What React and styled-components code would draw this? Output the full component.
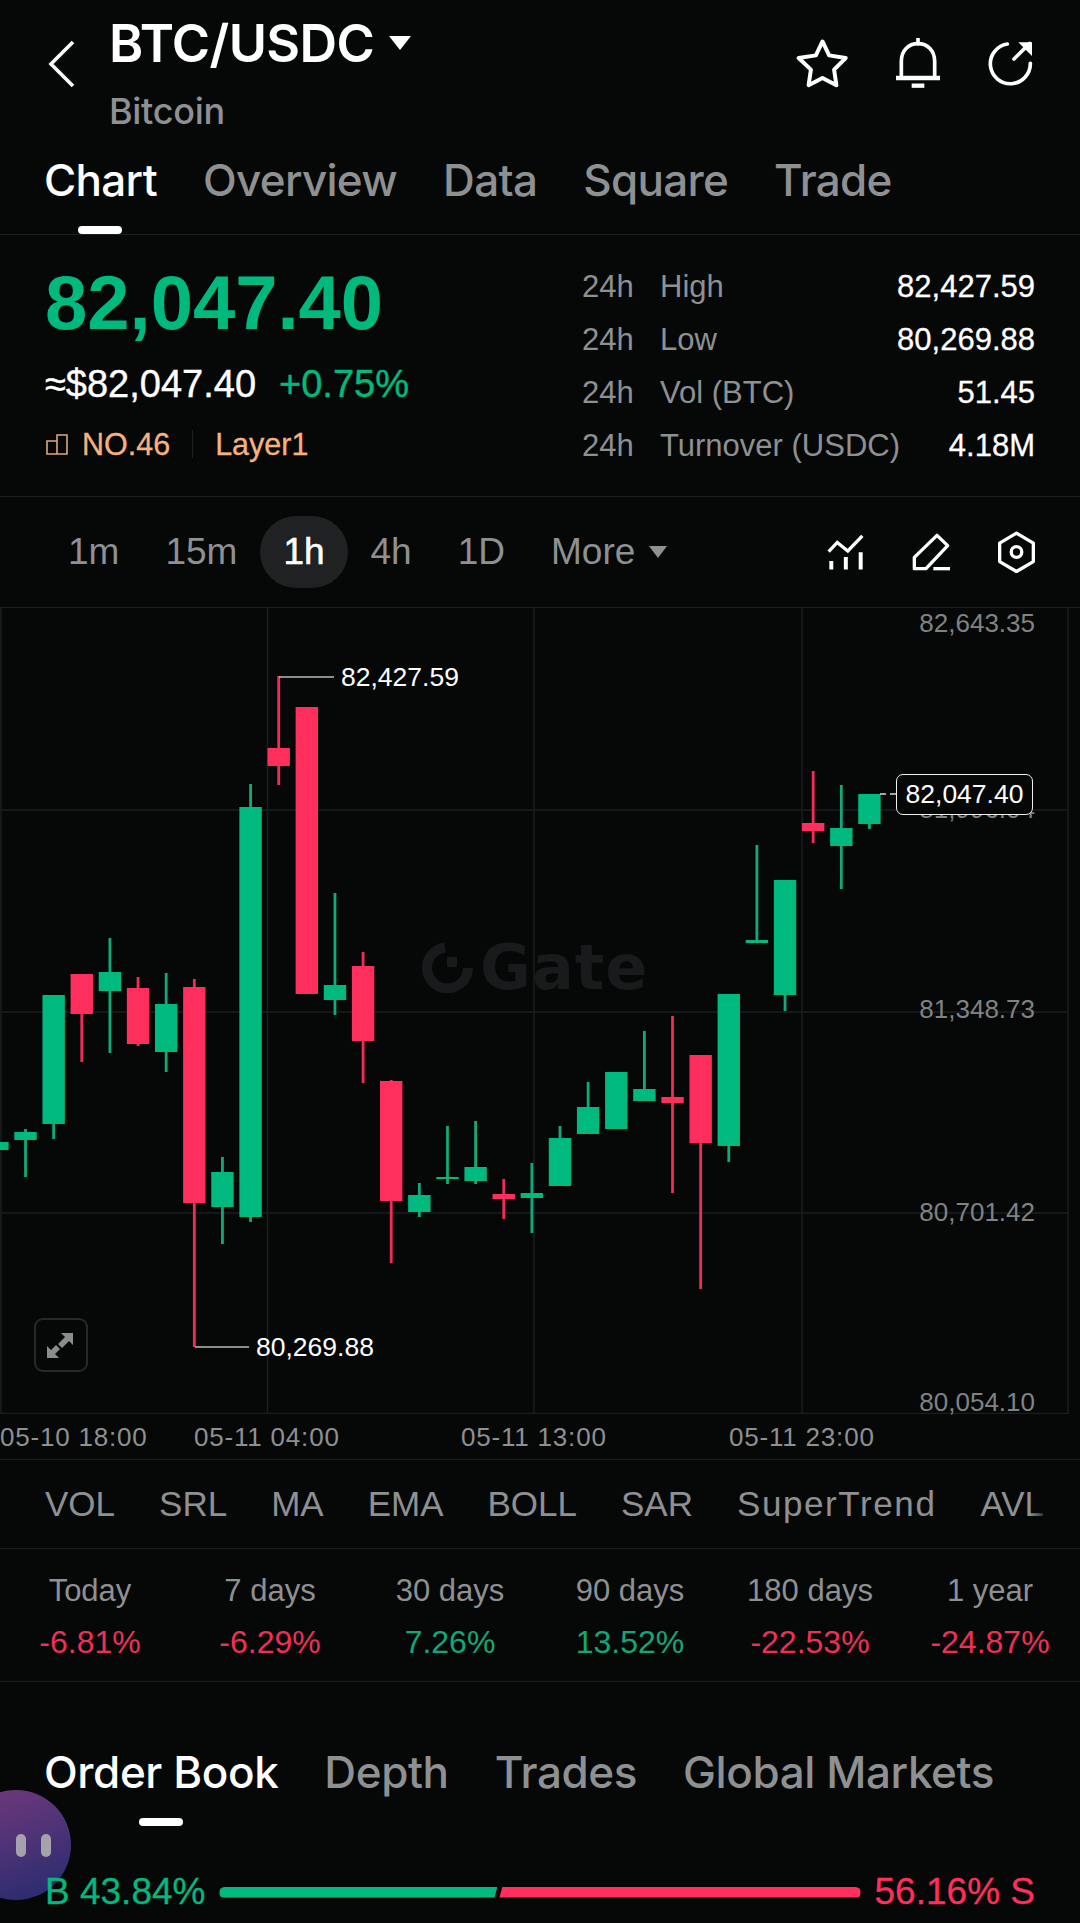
import { Fragment } from "react"
import styled, { createGlobalStyle } from "styled-components"

const GREEN = "#00b97f"
const RED = "#ff2e5c"
const MUTED = "#8e9092"
const LINE = "#1c1e1f"
const NUM = `"Liberation Sans", Arial, sans-serif`
const UI = `Inter, "Liberation Sans", sans-serif`

const GlobalStyle = createGlobalStyle`
    html, body {
        margin: 0;
        padding: 0;
        background: #060808;
    }
    * {
        box-sizing: border-box;
    }
`

const Page = styled.div`
    position: relative;
    width: 1080px;
    height: 1923px;
    overflow: hidden;
    background: #060808;
    color: #fff;
    font-family: ${UI};
`

const TopBar = styled.div`
    display: flex;
    align-items: flex-start;
    height: 130px;
    padding: 0 47px 0 48px;
`

const BackIcon = styled.svg`
    margin-top: 40px;
    margin-right: 33px;
    flex: none;
`

const TitleCol = styled.div`
    display: flex;
    flex-direction: column;
    flex: 1;
`

const TitleRow = styled.div`
    display: flex;
    align-items: center;
    height: 86px;
    gap: 15px;
`

const Title = styled.span`
    font-size: 52px;
    font-weight: 600;
    letter-spacing: -0.6px;
`

const Caret = styled.span`
    width: 0;
    height: 0;
    border-left: ${(p) => p.$size}px solid transparent;
    border-right: ${(p) => p.$size}px solid transparent;
    border-top: ${(p) => p.$size * 1.35}px solid ${(p) => p.$color};
`

const SubTitle = styled.span`
    margin-top: 6px;
    font-size: 36px;
    line-height: 38px;
    font-weight: 500;
    letter-spacing: -0.3px;
    color: ${MUTED};
`

const TopIcons = styled.div`
    display: flex;
    align-items: center;
    gap: 47px;
    height: 126px;
`

const Tabs = styled.div`
    display: flex;
    gap: ${(p) => p.$gap}px;
    height: ${(p) => p.$height}px;
    padding: ${(p) => p.$top}px 44px 0;
    letter-spacing: ${(p) => p.$spacing}px;
    border-bottom: ${(p) => (p.$line ? `1px solid ${LINE}` : "none")};
`

const Tab = styled.span`
    position: relative;
    height: 54px;
    font-size: 44px;
    line-height: 54px;
    font-weight: 500;
    color: ${(p) => (p.$active ? "#fff" : MUTED)};
    &::after {
        content: "";
        display: ${(p) => (p.$active ? "block" : "none")};
        position: absolute;
        left: 50%;
        bottom: ${(p) => p.$under}px;
        width: 44px;
        height: 8px;
        margin-left: -22px;
        border-radius: 4px;
        background: #fff;
    }
`

const Summary = styled.div`
    display: flex;
    justify-content: space-between;
    height: 262px;
    padding: 29px 45px 0;
    border-bottom: 1px solid ${LINE};
`

const PriceCol = styled.div`
    display: flex;
    flex-direction: column;
`

const BigPrice = styled.div`
    font-family: ${NUM};
    font-size: 76px;
    line-height: 78px;
    font-weight: 700;
    color: ${GREEN};
`

const FiatRow = styled.div`
    display: flex;
    align-items: center;
    gap: 23px;
    margin-top: 20px;
    height: 44px;
    font-family: ${NUM};
    font-size: 38px;
    -webkit-text-stroke: 0.4px currentColor;
`

const Fiat = styled.span`
    color: #fff;
`

const Change = styled.span`
    color: ${GREEN};
`

const TagRow = styled.div`
    display: flex;
    align-items: center;
    height: 36px;
    margin-top: 20px;
    font-family: ${NUM};
    font-size: 30.5px;
    color: #f5b27e;
    -webkit-text-stroke: 0.3px currentColor;
`

const RankIcon = styled.svg`
    margin: 0 14px 0 1px;
`

const TagSep = styled.span`
    width: 1px;
    height: 28px;
    margin: 0 22px;
    background: #1f2021;
`

const Stats = styled.div`
    display: grid;
    grid-template-columns: 78px minmax(0, 1fr) auto;
    grid-auto-rows: 53px;
    width: 453px;
    margin-top: -4px;
    align-items: center;
    white-space: nowrap;
    font-family: ${NUM};
    font-size: 31px;
`

const StatMuted = styled.span`
    color: ${MUTED};
`

const StatValue = styled.span`
    color: #fff;
    text-align: right;
    font-size: 31px;
    -webkit-text-stroke: 0.3px currentColor;
`

const Toolbar = styled.div`
    display: flex;
    align-items: center;
    height: 111px;
    padding: 0 45px;
    border-bottom: 1px solid ${LINE};
`

const Frame = styled.span`
    display: flex;
    align-items: center;
    height: 72px;
    padding: 0 23px;
    gap: 14px;
    border-radius: 36px;
    font-family: ${NUM};
    font-size: 37px;
    color: ${(p) => (p.$active ? "#fff" : MUTED)};
    background: ${(p) => (p.$active ? "#1f2122" : "transparent")};
    -webkit-text-stroke: ${(p) => (p.$active ? "0.6px #fff" : "0")};
`

const ToolIcons = styled.div`
    display: flex;
    align-items: center;
    gap: 47px;
    margin-left: auto;
`

const ChartArea = styled.div`
    position: relative;
    height: 806px;
`

const ChartSvg = styled.svg`
    position: relative;
    display: block;
    z-index: 1;
`

const Watermark = styled.div`
    position: absolute;
    left: 422px;
    top: 334px;
    display: flex;
    align-items: center;
    gap: 7px;
    height: 51px;
    font-family: "DejaVu Sans", sans-serif;
    font-size: 62px;
    font-weight: 700;
    letter-spacing: 1px;
    color: #191a1b;
`

const Axis = styled.span`
    position: absolute;
    z-index: 2;
    right: 45px;
    top: ${(p) => p.$top}px;
    font-family: ${NUM};
    font-size: 26px;
    line-height: 30px;
    color: #808284;
`

const Marker = styled.span`
    position: absolute;
    z-index: 2;
    left: ${(p) => p.$left}px;
    top: ${(p) => p.$top}px;
    font-family: ${NUM};
    font-size: 26.5px;
    line-height: 30px;
    color: #fff;
`

const PriceTag = styled.span`
    position: absolute;
    z-index: 3;
    left: 896px;
    top: 166px;
    width: 137px;
    height: 41px;
    border: 1px solid #f0f0f0;
    border-radius: 7px;
    background: #060808;
    font-family: ${NUM};
    font-size: 26.5px;
    line-height: 39px;
    text-align: center;
    color: #fff;
`

const ExpandBtn = styled.div`
    position: absolute;
    z-index: 2;
    left: 34px;
    top: 710px;
    display: flex;
    width: 54px;
    height: 54px;
    border: 2px solid #26282a;
    border-radius: 9px;
`

const TimeAxis = styled.div`
    display: grid;
    grid-template-columns: 194px 267px 268px 1fr;
    align-items: center;
    height: 46px;
    padding-top: 2px;
    border-bottom: 1px solid ${LINE};
    font-family: ${NUM};
    font-size: 26px;
    letter-spacing: 0.8px;
    color: ${MUTED};
`

const Indicators = styled.div`
    position: relative;
    display: flex;
    align-items: center;
    gap: 44px;
    height: 89px;
    padding: 0 45px;
    overflow: hidden;
    white-space: nowrap;
    border-bottom: 1px solid ${LINE};
    font-family: ${NUM};
    font-size: 35px;
    color: ${MUTED};
    &::after {
        content: "";
        position: absolute;
        right: 0;
        top: 0;
        bottom: 0;
        width: 50px;
        background: linear-gradient(to right, rgba(6, 8, 8, 0), #060808 40%);
    }
`

const IndicatorName = styled.span`
    letter-spacing: ${(p) => (p.$wide ? 1.6 : 0)}px;
`

const Periods = styled.div`
    display: grid;
    grid-template-columns: repeat(6, 180px);
    height: 133px;
    padding-top: 25px;
    border-bottom: 1px solid ${LINE};
    font-family: ${NUM};
    text-align: center;
`

const PeriodCol = styled.div`
    display: flex;
    flex-direction: column;
    gap: 17px;
`

const PeriodLabel = styled.span`
    font-size: 31px;
    line-height: 34px;
    color: ${MUTED};
`

const PeriodValue = styled.span`
    font-size: 32px;
    line-height: 34px;
    color: ${(p) => (p.$up ? "#10a878" : "#ef2f57")};
`

const Ratio = styled.div`
    position: relative;
    z-index: 1;
    display: flex;
    align-items: center;
    height: 36px;
    margin-top: 49px;
    padding: 0 45px;
    font-family: ${NUM};
    font-size: 37px;
    -webkit-text-stroke: 0.3px currentColor;
`

const RatioText = styled.span`
    color: ${(p) => p.$color};
`

const RatioBar = styled.div`
    display: flex;
    flex: 1;
    gap: 2px;
    height: 11px;
    margin: 0 14px;
`

const BuyBar = styled.div`
    flex: none;
    width: 278px;
    background: ${GREEN};
    border-radius: 6px 0 0 6px;
    clip-path: polygon(0 0, 100% 0, calc(100% - 3px) 100%, 0 100%);
`

const SellBar = styled.div`
    flex: 1;
    background: ${RED};
    border-radius: 0 6px 6px 0;
    clip-path: polygon(3px 0, 100% 0, 100% 100%, 0 100%);
`

const Blob = styled.div`
    position: absolute;
    left: -39px;
    top: 1790px;
    display: flex;
    align-items: center;
    justify-content: flex-end;
    gap: 15px;
    width: 110px;
    height: 110px;
    padding-right: 20px;
    border-radius: 50%;
    background: linear-gradient(160deg, #74397a 0%, #4d3277 50%, #232b6c 100%);
`

const BlobBar = styled.span`
    width: 10px;
    height: 23px;
    border-radius: 5px;
    background: #a5a2ac;
`

// color, wick top, body top, body bottom, wick bottom - all in page px
const candles = [
    ["g", 1142, 1142, 1150, 1150],
    ["g", 1129, 1132, 1140, 1177],
    ["g", 995, 995, 1124, 1139],
    ["r", 974, 974, 1014, 1062],
    ["g", 938, 972, 991, 1053],
    ["r", 977, 988, 1044, 1046],
    ["g", 973, 1004, 1052, 1072],
    ["r", 979, 987, 1203, 1347],
    ["g", 1157, 1172, 1207, 1244],
    ["g", 784, 807, 1217, 1222],
    ["r", 676, 748, 766, 785],
    ["r", 707, 707, 994, 994],
    ["g", 893, 985, 1000, 1015],
    ["r", 952, 966, 1041, 1083],
    ["r", 1080, 1081, 1201, 1263],
    ["g", 1183, 1195, 1212, 1217],
    ["g", 1126, 1177, 1179, 1184],
    ["g", 1121, 1167, 1181, 1184],
    ["r", 1179, 1194, 1199, 1219],
    ["g", 1163, 1193, 1198, 1233],
    ["g", 1126, 1138, 1186, 1186],
    ["g", 1082, 1107, 1134, 1134],
    ["g", 1072, 1072, 1129, 1129],
    ["g", 1031, 1089, 1101, 1101],
    ["r", 1016, 1097, 1103, 1193],
    ["r", 1055, 1055, 1143, 1289],
    ["g", 994, 994, 1146, 1162],
    ["g", 845, 940, 943, 943],
    ["g", 880, 880, 995, 1011],
    ["r", 771, 823, 831, 843],
    ["g", 785, 828, 846, 889],
    ["g", 794, 794, 824, 829],
]

const gridX = [1, 267.5, 534, 802, 1068]
const gridY = [810, 1012, 1213]

function Chart() {
    return (
        <ChartSvg width="1080" height="806" viewBox="0 608 1080 806">
            {gridX.map((x) => (
                <line key={x} x1={x} x2={x} y1="608" y2="1414" stroke="#1b1d1e" strokeWidth="1.5" />
            ))}
            {gridY.map((y) => (
                <line key={y} x1="0" x2="1068" y1={y} y2={y} stroke="#1b1d1e" strokeWidth="1.5" />
            ))}
            <line x1="0" x2="1068" y1="1413.5" y2="1413.5" stroke="#1b1d1e" strokeWidth="1.5" />
            {candles.map(([color, top, open, close, bottom], i) => {
                const x = -2.6 + 28.13 * i
                const up = color === "g"
                return (
                    <g key={i}>
                        <rect x={x - 1.4} y={top} width="2.8" height={bottom - top} fill={up ? "#12a97b" : "#f22c58"} />
                        <rect x={x - 11.2} y={open} width="22.4" height={close - open} fill={up ? GREEN : RED} />
                    </g>
                )
            })}
            <path d="M279 677H334" stroke="#b9bbbc" strokeWidth="1.5" fill="none" />
            <path d="M195 1347H249" stroke="#b9bbbc" strokeWidth="1.5" fill="none" />
            <path d="M880 794H886M890 794H896" stroke="#d8d8d8" strokeWidth="1.5" fill="none" />
        </ChartSvg>
    )
}

function StarIcon() {
    return (
        <svg width="53" height="50" viewBox="50 40 160 150" fill="none" stroke="#fff" strokeWidth="12" strokeLinejoin="round">
            <path d="M130 50 150 92 200 100 165 135 172 182 130 160 88 182 95 135 58 100 110 92Z" />
        </svg>
    )
}

function BellIcon() {
    return (
        <svg width="44" height="50" viewBox="345 40 132 150" fill="none" stroke="#fff" strokeWidth="11">
            <path d="M361 160V110C361 78 382 57 411 57S461 78 461 110V160" />
            <path d="M411 40V57" strokeLinecap="round" />
            <path d="M345 160H477" strokeWidth="13" />
            <path d="M392 183H430" strokeWidth="13" />
        </svg>
    )
}

function ShareIcon() {
    return (
        <svg width="46" height="45" viewBox="622 55 138 135" fill="none" stroke="#fff" strokeWidth="11" strokeLinecap="round">
            <path d="M683 64A60 60 0 1 0 752 122" />
            <path d="M703 109 750 62" />
            <path d="M716 59H757V100Z" fill="#fff" stroke="none" />
        </svg>
    )
}

function IndicatorIcon() {
    return (
        <svg width="37" height="36" viewBox="45 43 112 108" fill="none" stroke="#fff" strokeWidth="10">
            <path d="M50 96 76 68 108 94 152 48" />
            <path d="M58 150V124M102 150V112M147 150V98" strokeWidth="12" />
        </svg>
    )
}

function PenIcon() {
    return (
        <svg width="40" height="38" viewBox="300 38 120 114" fill="none" stroke="#fff" strokeWidth="10" strokeLinejoin="round">
            <path d="M310 111 378 45 410 76 345 145H310Z" />
            <path d="M367 145H417" />
        </svg>
    )
}

function HexIcon() {
    return (
        <svg width="37" height="42" viewBox="562 36 112 126" fill="none" stroke="#fff" strokeWidth="10" strokeLinejoin="round">
            <path d="M618 42 669 72V128L618 158 567 128V72Z" />
            <circle cx="618" cy="99" r="16" />
        </svg>
    )
}

function GateMark() {
    return (
        <svg width="51" height="51" viewBox="0 0 51 51" fill="none">
            <path d="M23 5.5A20.5 20.5 0 1 0 46 26" stroke="#191a1b" strokeWidth="10" />
            <rect x="25" y="15" width="10" height="10" fill="#191a1b" />
        </svg>
    )
}

const frames = ["1m", "15m", "1h", "4h", "1D"]
const stats = [
    ["High", "82,427.59"],
    ["Low", "80,269.88"],
    ["Vol (BTC)", "51.45"],
    ["Turnover (USDC)", "4.18M"],
]
const indicators = ["VOL", "SRL", "MA", "EMA", "BOLL", "SAR", "SuperTrend", "AVL"]
const periods = [
    ["Today", "-6.81%", false],
    ["7 days", "-6.29%", false],
    ["30 days", "7.26%", true],
    ["90 days", "13.52%", true],
    ["180 days", "-22.53%", false],
    ["1 year", "-24.87%", false],
]

function App() {
    return (
        <Page>
            <GlobalStyle />
            <TopBar>
                <BackIcon width="28" height="48" viewBox="0 0 28 48" fill="none" stroke="#fff" strokeWidth="3.6">
                    <path d="M25 2 3 24 25 46" />
                </BackIcon>
                <TitleCol>
                    <TitleRow>
                        <Title>BTC/USDC</Title>
                        <Caret $size={11} $color="#fff" />
                    </TitleRow>
                    <SubTitle>Bitcoin</SubTitle>
                </TitleCol>
                <TopIcons>
                    <StarIcon />
                    <BellIcon />
                    <ShareIcon />
                </TopIcons>
            </TopBar>

            <Tabs $gap={46} $height={105} $top={23} $spacing={-0.7} $line>
                <Tab $active $under={-27}>Chart</Tab>
                <Tab>Overview</Tab>
                <Tab>Data</Tab>
                <Tab>Square</Tab>
                <Tab>Trade</Tab>
            </Tabs>

            <Summary>
                <PriceCol>
                    <BigPrice>82,047.40</BigPrice>
                    <FiatRow>
                        <Fiat>≈$82,047.40</Fiat>
                        <Change>+0.75%</Change>
                    </FiatRow>
                    <TagRow>
                        <RankIcon width="22" height="22" viewBox="0 0 22 22" fill="none" stroke="#dba87e" strokeWidth="1.6">
                            <path d="M1 8H11V21H1ZM11 2H21V21H11Z" />
                        </RankIcon>
                        NO.46
                        <TagSep />
                        Layer1
                    </TagRow>
                </PriceCol>
                <Stats>
                    {stats.map(([label, value]) => (
                        <Fragment key={label}>
                            <StatMuted>24h</StatMuted>
                            <StatMuted>{label}</StatMuted>
                            <StatValue>{value}</StatValue>
                        </Fragment>
                    ))}
                </Stats>
            </Summary>

            <Toolbar>
                {frames.map((f) => (
                    <Frame key={f} $active={f === "1h"}>{f}</Frame>
                ))}
                <Frame>
                    More
                    <Caret $size={9} $color={MUTED} />
                </Frame>
                <ToolIcons>
                    <IndicatorIcon />
                    <PenIcon />
                    <HexIcon />
                </ToolIcons>
            </Toolbar>

            <ChartArea>
                <Watermark>
                    <GateMark />
                    <span>Gate</span>
                </Watermark>
                <Chart />
                <Axis $top={0}>82,643.35</Axis>
                <Axis $top={186}>81,996.04</Axis>
                <Axis $top={386}>81,348.73</Axis>
                <Axis $top={589}>80,701.42</Axis>
                <Axis $top={779}>80,054.10</Axis>
                <Marker $left={341} $top={54}>82,427.59</Marker>
                <Marker $left={256} $top={724}>80,269.88</Marker>
                <PriceTag>82,047.40</PriceTag>
                <ExpandBtn>
                    <svg width="50" height="50" viewBox="0 0 50 50" fill="#8a8c8e" stroke="none">
                        <path d="M25 13H37V25L33 21 26 28 22 24 29 17ZM11 38V26L15 30 20 25 24 29 19 34 23 38Z" />
                    </svg>
                </ExpandBtn>
            </ChartArea>

            <TimeAxis>
                <span>05-10 18:00</span>
                <span>05-11 04:00</span>
                <span>05-11 13:00</span>
                <span>05-11 23:00</span>
            </TimeAxis>

            <Indicators>
                {indicators.map((name) => (
                    <IndicatorName key={name} $wide={name === "SuperTrend"}>{name}</IndicatorName>
                ))}
            </Indicators>

            <Periods>
                {periods.map(([label, value, up]) => (
                    <PeriodCol key={label}>
                        <PeriodLabel>{label}</PeriodLabel>
                        <PeriodValue $up={up}>{value}</PeriodValue>
                    </PeriodCol>
                ))}
            </Periods>

            <Tabs $gap={46} $height={143} $top={63} $spacing={-0.4}>
                <Tab $active $under={-27}>Order Book</Tab>
                <Tab>Depth</Tab>
                <Tab>Trades</Tab>
                <Tab>Global Markets</Tab>
            </Tabs>

            <Blob>
                <BlobBar />
                <BlobBar />
            </Blob>

            <Ratio>
                <RatioText $color={GREEN}>B 43.84%</RatioText>
                <RatioBar>
                    <BuyBar />
                    <SellBar />
                </RatioBar>
                <RatioText $color={RED}>56.16% S</RatioText>
            </Ratio>
        </Page>
    )
}

export default App
